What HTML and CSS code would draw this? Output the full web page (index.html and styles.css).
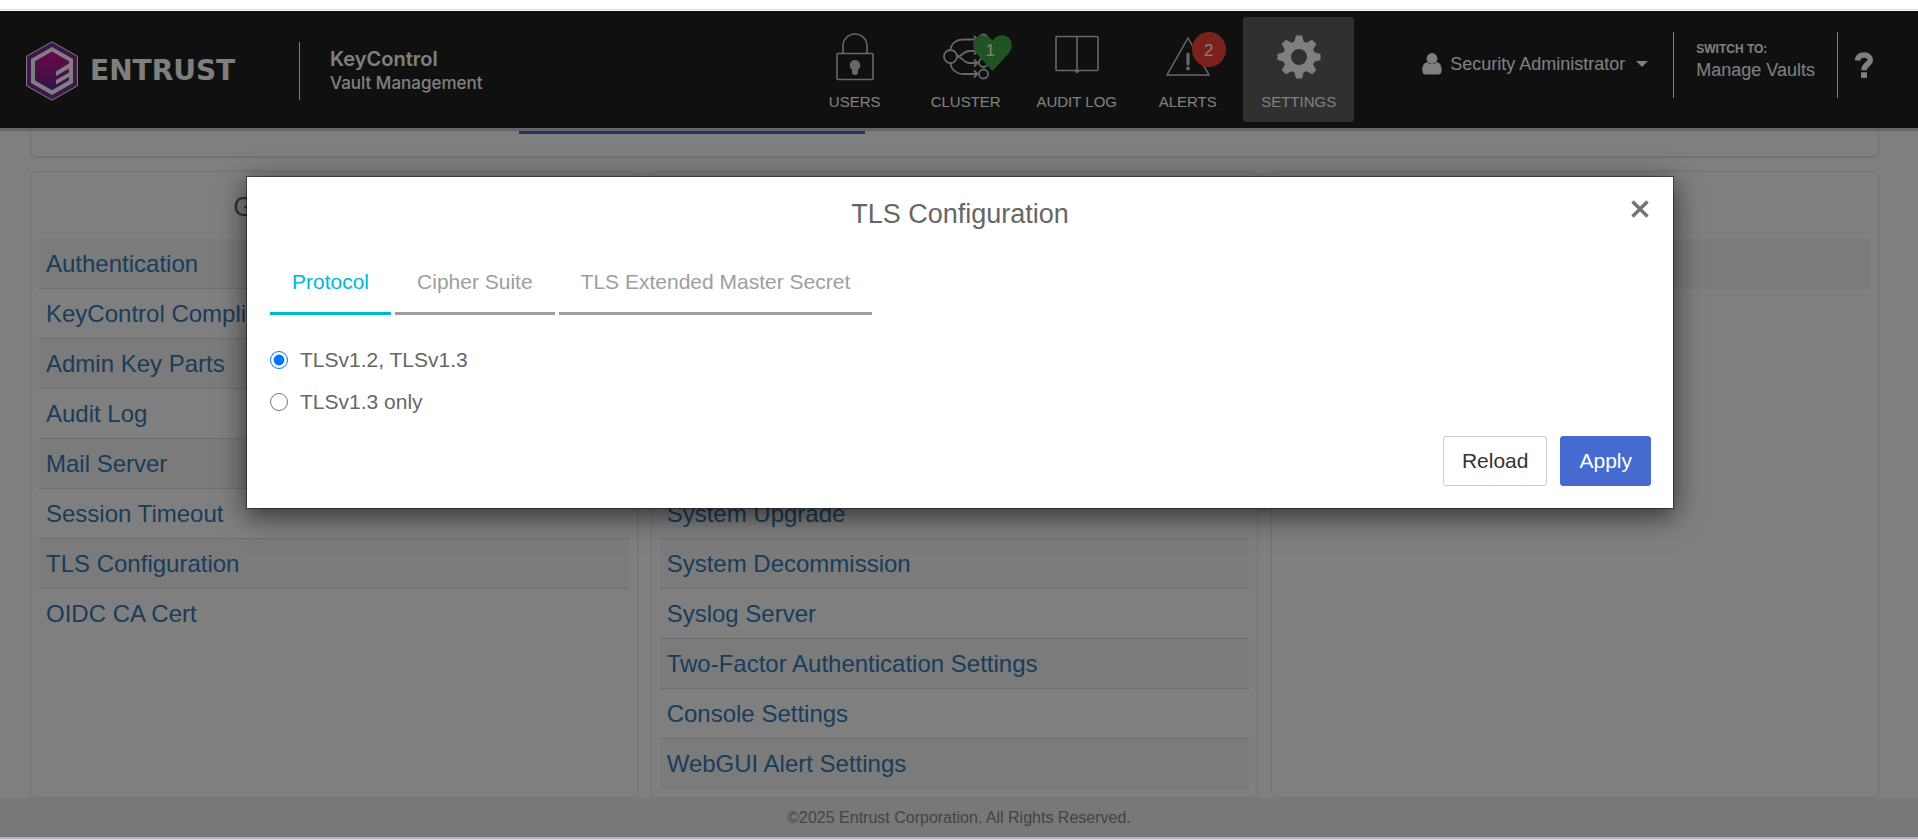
FILE: index.html
```html
<!DOCTYPE html>
<html lang="en">
<head>
<meta charset="utf-8">
<title>KeyControl Vault Management</title>
<link rel="stylesheet" href="styles.css">
</head>
<body>
<div class="top-strip"></div>
<div class="app">
  <header class="header">
    <div class="brand">
      <svg class="brand-mark" viewBox="0 0 52 60" width="52" height="60" aria-hidden="true">
        <defs>
          <linearGradient id="core" x1="0" y1="0" x2="0" y2="1">
            <stop offset="0" stop-color="#dc0a8c"/>
            <stop offset="1" stop-color="#5a2d91"/>
          </linearGradient>
        </defs>
        <path d="M26 .8 51.4 15.2V44.8L26 59.2.6 44.8V15.2Z" fill="#7a2f96" stroke="#fff" stroke-width="1"/>
        <path d="M26 6 47 18V42L26 54 5 42V18Z" fill="#fff"/>
        <path d="M26 10.5 43 20.3V22.6L30 30.4V35L43 27.4V31.4L30 39V43.400L43 36V39.3L26 49.3 9 39.5V20.3Z" fill="url(#core)"/>
      </svg>
      <span class="brand-name">ENTRUST</span>
      <span class="product"><strong class="product-name">KeyControl</strong><span class="product-sub">Vault Management</span></span>
    </div>
    <nav class="nav">
      <a class="nav-item" href="#">
        <span class="nav-icon"><svg viewBox="0 0 44 50" width="44" height="50" aria-hidden="true"><g fill="none" stroke="#cfcfcf" stroke-width="1.6"><rect x="4" y="21.500" width="36" height="26" rx="1"/><path d="M10 21.500V14a12 12 0 0 1 24 0V21.500"/></g><path d="M22 28a5.300 5.300 0 0 1 3 9.600V40a3 3 0 0 1-6 0V37.600A5.300 5.300 0 0 1 22 28Z" fill="#cfcfcf"/></svg></span>
        <span>USERS</span>
      </a>
      <a class="nav-item" href="#">
        <span class="nav-icon"><svg viewBox="0 0 46 50" width="46" height="50" aria-hidden="true"><g fill="none" stroke="#cfcfcf" stroke-width="1.8"><circle cx="7.500" cy="24.500" r="6.500"/><circle cx="40.500" cy="7" r="4.500"/><circle cx="40.500" cy="19" r="4.500"/><circle cx="40.500" cy="30.500" r="4.500"/><circle cx="40.500" cy="42" r="4.500"/><path d="M7.500 18C8 11 14 7.500 20 7.500H34M7.500 31C8 38 14 42 20 42H34M14 24.500C20 24.500 20 19 26 19H34M14 24.500C20 24.500 20 31 26 31H34"/><path d="M31 4 34.500 7.500 31 11M31 15.500 34.500 19 31 22.500M31 27.500 34.500 31 31 34.500M31 38.500 34.500 42 31 45.500"/></g></svg>
          <span class="badge badge-heart"><svg viewBox="0 0 39 36" width="39" height="36" aria-hidden="true"><path d="M19.500 36 3.500 18.500C-1.500 12.500-.5 5 4.500 1.800 9.500-1.500 16.500.2 19.500 6 22.500.2 29.500-1.500 34.500 1.800 39.500 5 40.500 12.500 35.500 18.500Z" fill="#43a847"/></svg><span class="badge-text">1</span></span></span>
        <span>CLUSTER</span>
      </a>
      <a class="nav-item" href="#">
        <span class="nav-icon"><svg viewBox="0 0 44 50" width="44" height="50" aria-hidden="true"><g fill="none" stroke="#cfcfcf" stroke-width="1.600"><rect x="1" y="4.500" width="42" height="34" rx="1"/><path d="M22 4.500V39"/></g><path d="M19.500 39H24.500L22 41.500Z" fill="#cfcfcf"/></svg></span>
        <span>AUDIT LOG</span>
      </a>
      <a class="nav-item" href="#">
        <span class="nav-icon"><svg viewBox="0 0 44 50" width="44" height="50" aria-hidden="true"><path d="M22 6 43 43H1Z" fill="none" stroke="#cfcfcf" stroke-width="1.500"/><path d="M22 22V32" stroke="#cfcfcf" stroke-width="3.200" stroke-linecap="round"/><circle cx="22" cy="36.500" r="2" fill="#cfcfcf"/></svg>
          <span class="badge badge-round">2</span></span>
        <span>ALERTS</span>
      </a>
      <a class="nav-item nav-item-active" href="#">
        <span class="nav-icon"><svg viewBox="-22 -25 44 50" width="44" height="50" aria-hidden="true"><mask id="hole" maskUnits="userSpaceOnUse" x="-25" y="-25" width="50" height="50"><rect x="-25" y="-25" width="50" height="50" fill="#fff"/><circle r="8.500" fill="#000"/></mask><g fill="#fff"><path d="M-5-14-3-21.500H3L5-14V14L3 21.500H-3L-5 14Z" mask="url(#hole)"/><path d="M-5-14-3-21.500H3L5-14V14L3 21.500H-3L-5 14Z" mask="url(#hole)" transform="rotate(45)"/><path d="M-5-14-3-21.500H3L5-14V14L3 21.500H-3L-5 14Z" mask="url(#hole)" transform="rotate(90)"/><path d="M-5-14-3-21.500H3L5-14V14L3 21.500H-3L-5 14Z" mask="url(#hole)" transform="rotate(135)"/></g><circle r="12" fill="none" stroke="#fff" stroke-width="8"/></svg></span>
        <span>SETTINGS</span>
      </a>
    </nav>
    <div class="account">
      <button class="user" type="button">
        <svg viewBox="0 0 20 22" width="20" height="22" aria-hidden="true"><path d="M5.300 9.200C2 9.500.3 12.500.3 17.500.3 20 1.800 21.500 4 21.500H16C18.200 21.500 19.700 20 19.700 17.500 19.700 12.500 18 9.500 14.700 9.200A6.800 6.800 0 0 1 5.300 9.200Z" fill="#fff"/><circle cx="10" cy="5.500" r="5.400" fill="#fff"/></svg>
        <span>Security Administrator</span>
        <span class="caret"></span>
      </button>
      <a class="switch" href="#"><span class="switch-label">SWITCH TO:</span><span>Manage Vaults</span></a>
      <a class="help" href="#" aria-label="Help"><svg viewBox="0 0 20 26" width="20" height="26" aria-hidden="true"><path d="M3.500 8.500C4 4.500 6.500 3 10 3 13.500 3 16.200 5 16.200 8 16.200 12.500 10 12 10 18.300" fill="none" stroke="#fff" stroke-width="5.600"/><rect x="7" y="20.300" width="6" height="5.700" fill="#fff"/></svg></a>
    </div>
  </header>
  <main class="content">
    <div class="tab-card"><div class="tab-indicator"></div></div>
    <div class="cards">
      <section class="card">
        <h2 class="card-title">General Settings</h2>
        <ul class="links">
          <li><a href="#">Authentication</a></li>
          <li><a href="#">KeyControl Compliance</a></li>
          <li><a href="#">Admin Key Parts</a></li>
          <li><a href="#">Audit Log</a></li>
          <li><a href="#">Mail Server</a></li>
          <li><a href="#">Session Timeout</a></li>
          <li><a href="#">TLS Configuration</a></li>
          <li><a href="#">OIDC CA Cert</a></li>
        </ul>
      </section>
      <section class="card">
        <h2 class="card-title"></h2>
        <ul class="links">
          <li></li>
          <li></li>
          <li></li>
          <li></li>
          <li></li>
          <li><a href="#">System Upgrade</a></li>
          <li><a href="#">System Decommission</a></li>
          <li><a href="#">Syslog Server</a></li>
          <li><a href="#">Two-Factor Authentication Settings</a></li>
          <li><a href="#">Console Settings</a></li>
          <li><a href="#">WebGUI Alert Settings</a></li>
        </ul>
      </section>
      <section class="card">
        <h2 class="card-title"></h2>
        <ul class="links">
          <li></li>
        </ul>
      </section>
    </div>
  </main>
  <footer class="footer">©2025 Entrust Corporation. All Rights Reserved.</footer>
  <div class="overlay">
    <div class="modal" role="dialog" aria-labelledby="modal-title">
      <div class="modal-head">
        <h1 class="modal-title" id="modal-title">TLS Configuration</h1>
        <button class="close" type="button" aria-label="Close"><svg viewBox="0 0 18 18" width="18" height="18" aria-hidden="true"><path d="M1.500 1.500 16.500 16.500M16.500 1.500 1.500 16.500" stroke="#757575" stroke-width="3.400"/></svg></button>
      </div>
      <div class="tabs" role="tablist">
        <button class="tab tab-active" type="button" role="tab" aria-selected="true">Protocol</button>
        <button class="tab" type="button" role="tab" aria-selected="false">Cipher Suite</button>
        <button class="tab" type="button" role="tab" aria-selected="false">TLS Extended Master Secret</button>
      </div>
      <form class="form">
        <label class="option"><input type="radio" name="protocol" checked>TLSv1.2, TLSv1.3</label>
        <label class="option"><input type="radio" name="protocol">TLSv1.3 only</label>
        <div class="actions">
          <button class="btn" type="button">Reload</button>
          <button class="btn btn-primary" type="button">Apply</button>
        </div>
      </form>
    </div>
  </div>
</div>
<div class="bottom-strip"></div>
</body>
</html>
```
FILE: styles.css
```css
* {
  box-sizing: border-box;
}

body {
  margin: 0;
  min-height: 100vh;
  display: flex;
  flex-direction: column;
  background: #fff;
  color: #666;
  font-family: "Liberation Sans", Arial, sans-serif;
}

button {
  font-family: inherit;
  cursor: pointer;
}

a {
  text-decoration: none;
}

svg {
  display: block;
}

.top-strip {
  height: 11px;
  border-bottom: 1px solid #fff;
  box-shadow: inset 0 -1px #d9dcdc;
}

.bottom-strip {
  height: 3px;
  background: #ead9ee;
  border-top: 2px solid #bfadc5;
}

.app {
  position: relative;
  flex: 1;
  display: flex;
  flex-direction: column;
}

/* Header */

.header {
  display: flex;
  align-items: flex-start;
  padding: 6px 44px 6px 26px;
  background: #202020;
  border-bottom: 3px solid #ccc;
  color: #fff;
}

.brand {
  display: flex;
  align-items: center;
  margin-top: 24px;
}

.brand-name {
  width: 207px;
  margin-left: 12px;
  font: bold 28px/58px "DejaVu Sans", sans-serif;
}

.product {
  display: flex;
  flex-direction: column;
  justify-content: center;
  height: 58px;
  margin-left: 2px;
  padding-left: 30px;
  border-left: 1px solid #fff;
  font-family: Inter, sans-serif;
}

.product-name {
  font-size: 20px;
  font-weight: 600;
  line-height: 24px;
}

.product-sub {
  font-size: 17px;
  font-weight: 500;
  line-height: 24px;
}

.nav {
  display: flex;
  margin-left: auto;
}

.nav-item {
  display: flex;
  flex-direction: column;
  align-items: center;
  width: 111px;
  height: 105px;
  padding-top: 15px;
  border-radius: 3px;
  color: #fff;
  font-size: 15px;
  line-height: 20px;
  gap: 10px;
}

.nav-item-active {
  background: #606060;
}

.nav-icon {
  position: relative;
}

.badge {
  position: absolute;
  color: #fff;
  font-size: 17px;
}

.badge-heart {
  top: 3px;
  left: 30px;
}

.badge-text {
  position: absolute;
  inset: 0 4px 4px 0;
  line-height: 32px;
  text-align: center;
}

.badge-round {
  top: 0;
  left: 26px;
  width: 34px;
  height: 35px;
  border-radius: 50%;
  background: #f44336;
  line-height: 38px;
  text-align: center;
}

.account {
  display: flex;
  margin-top: 15px;
  margin-left: 68px;
  font-size: 18px;
}

.user {
  display: flex;
  align-items: center;
  height: 66px;
  padding: 0 25px 2px 0;
  gap: 8px;
  border: 0;
  background: none;
  color: #fff;
  font-size: 18px;
}

.caret {
  margin-left: 3px;
  border: 6px solid transparent;
  border-top-color: #fff;
  border-bottom: 0;
}

.switch {
  display: flex;
  flex-direction: column;
  height: 66px;
  padding: 9px 22px 0;
  border: solid #fff;
  border-width: 0 1px;
  color: #fff;
  line-height: 24px;
}

.switch-label {
  font-size: 12px;
  font-weight: bold;
  line-height: 17px;
}

.help {
  margin-top: 20px;
  margin-left: 16px;
}

/* Page content */

.content {
  padding: 0 39px 0 30px;
}

.tab-card {
  height: 26px;
  border: 1px solid #e4e4e4;
  border-top: 0;
  border-radius: 0 0 7px 7px;
  box-shadow: 0 1px 2px #ddd;
}

.tab-indicator {
  width: 346px;
  height: 3px;
  margin-left: 488px;
  background: #456bd1;
}

.cards {
  display: grid;
  grid-template-columns: repeat(3, 1fr);
  gap: 13px;
  margin-top: 14px;
}

.card {
  padding: 0 8px;
  border: 1px solid #e6e6e6;
  border-radius: 7px;
  box-shadow: 0 0 2px #e6e6e6;
}

.card-title {
  min-height: 67px;
  margin: 0;
  padding: 17px 0 14px;
  font-size: 27px;
  font-weight: normal;
  line-height: 36px;
  text-align: center;
}

.links {
  margin: 0;
  padding: 0 0 8px;
  list-style: none;
  font-size: 24px;
  line-height: 34px;
}

.links li {
  min-height: 50px;
  padding: 8px 7px 7px;
  border-bottom: 1px solid #ddd;
}

.links li:nth-child(odd) {
  background: #f7f7f7;
}

.links li:last-child {
  border-bottom-color: transparent;
}

.links a {
  color: #337ab7;
}

.footer {
  flex: 1;
  background: #f0f0f0;
  color: #888;
  font-size: 16px;
  line-height: 39px;
  text-align: center;
}

/* Dialog */

.overlay {
  position: absolute;
  inset: 0;
  padding: 165px 244px 0 246px;
  background: rgba(0, 0, 0, 0.5);
}

.modal {
  padding: 18px 22px 22px;
  border: 1px solid rgba(0, 0, 0, 0.4);
  background: #fff;
  background-clip: padding-box;
  box-shadow: 0 7px 26px rgba(0, 0, 0, 0.6);
}

.modal-head {
  position: relative;
}

.modal-title {
  margin: 0;
  font-size: 27px;
  font-weight: normal;
  line-height: 38px;
  text-align: center;
}

.close {
  position: absolute;
  top: 5px;
  right: 2px;
  padding: 0;
  border: 0;
  background: none;
}

.tabs {
  display: flex;
  gap: 4px;
  margin-top: 22px;
  padding-left: 1px;
}

.tab {
  padding: 12px 22px 15px;
  border: 0;
  border-bottom: 3px solid #9e9e9e;
  background: none;
  color: #9e9e9e;
  font-size: 21px;
  line-height: 30px;
}

.tab-active {
  border-color: #00b8d4;
  color: #00b8d4;
}

.form {
  margin-top: 24px;
  padding-left: 1px;
  font-size: 21px;
}

.option {
  display: flex;
  align-items: center;
  gap: 12px;
  line-height: 42px;
}

.option input {
  width: 18px;
  height: 18px;
  margin: 0;
}

.actions {
  display: flex;
  justify-content: flex-end;
  gap: 13px;
  margin-top: 13px;
}

.btn {
  padding: 9px 18px;
  border: 1px solid #ccc;
  border-radius: 3px;
  background: #fff;
  color: #333;
  font-size: 21px;
  line-height: 30px;
}

.btn-primary {
  border-color: #456bd1;
  background: #456bd1;
  color: #fff;
}
```
